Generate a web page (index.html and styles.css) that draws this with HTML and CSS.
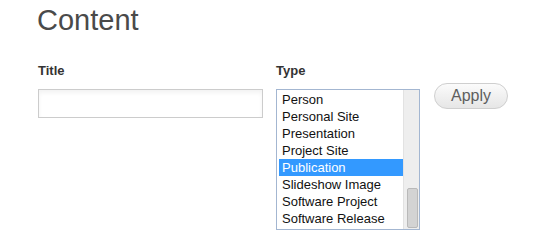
FILE: index.html
```html
<!DOCTYPE html>
<html>
	<head>
		<meta charset="UTF-8">
		<title>Content</title>
		<link rel="stylesheet" href="styles.css">
	</head>
	<body>
		<div class="page">
			<h1>Content</h1>
			<form class="filters">
				<div class="field">
					<label class="label">Title</label>
					<input class="text" type="text">
				</div>
				<div class="field">
					<label class="label">Type</label>
					<div class="listbox">
						<ul class="options">
							<li>Person</li>
							<li>Personal Site</li>
							<li>Presentation</li>
							<li>Project Site</li>
							<li class="sel">Publication</li>
							<li>Slideshow Image</li>
							<li>Software Project</li>
							<li>Software Release</li>
						</ul>
						<div class="scroll"><span class="thumb"></span></div>
					</div>
				</div>
				<div class="actions">
					<button class="btn" type="button">Apply</button>
				</div>
			</form>
		</div>
	</body>
</html>
```

FILE: styles.css
```css
*{margin: 0;padding: 0;box-sizing: border-box;}
body{background: #fff;font-family: "Liberation Sans", Arial, sans-serif;}
.page{padding: 4px 0 0 38px;}
h1{font-size: 29px;line-height: 33px;font-weight: normal;color: #4a4a4a;margin-left: -1px;}

.filters{display: flex;align-items: flex-start;gap: 13px;margin-top: 26px;}
.field{display: flex;flex-direction: column;}
.label{font-size: 13px;line-height: 15px;font-weight: bold;color: #333;margin-bottom: 11px;}

.text{width: 225px;height: 29px;border: 1px solid #cccccc;background: #fff;box-shadow: inset 0 3px 4px rgba(0,0,0,0.05);outline: none;}

.listbox{display: flex;width: 144px;height: 141px;border: 1px solid #a3b6d1;padding: 1px 0 0 2px;background: #fff;}
.options{flex: 1;list-style: none;}
.options li{font-size: 13px;line-height: 17px;height: 17px;padding-left: 3px;color: #111;white-space: nowrap;}
.options .sel{background: #3399ff;color: #fff;}
.scroll{width: 16px;margin-top: -1px;background: #eeeeee;border-left: 1px solid #e2e2e2;display: flex;flex-direction: column;justify-content: flex-end;align-items: flex-end;padding: 0 1px 1px 0;}
.thumb{display: block;width: 11px;height: 40px;background: #d3d3d3;border: 1px solid #b9b9b9;border-radius: 2px;}

.actions{margin-top: 20px;padding-left: 1px;}
.btn{width: 74px;height: 26px;border: 1px solid #cfcfcf;border-radius: 13px;background: linear-gradient(#fbfbfb, #e6e6e6);font-family: "Liberation Sans", Arial, sans-serif;font-size: 16px;color: #5e5e5e;}
```
